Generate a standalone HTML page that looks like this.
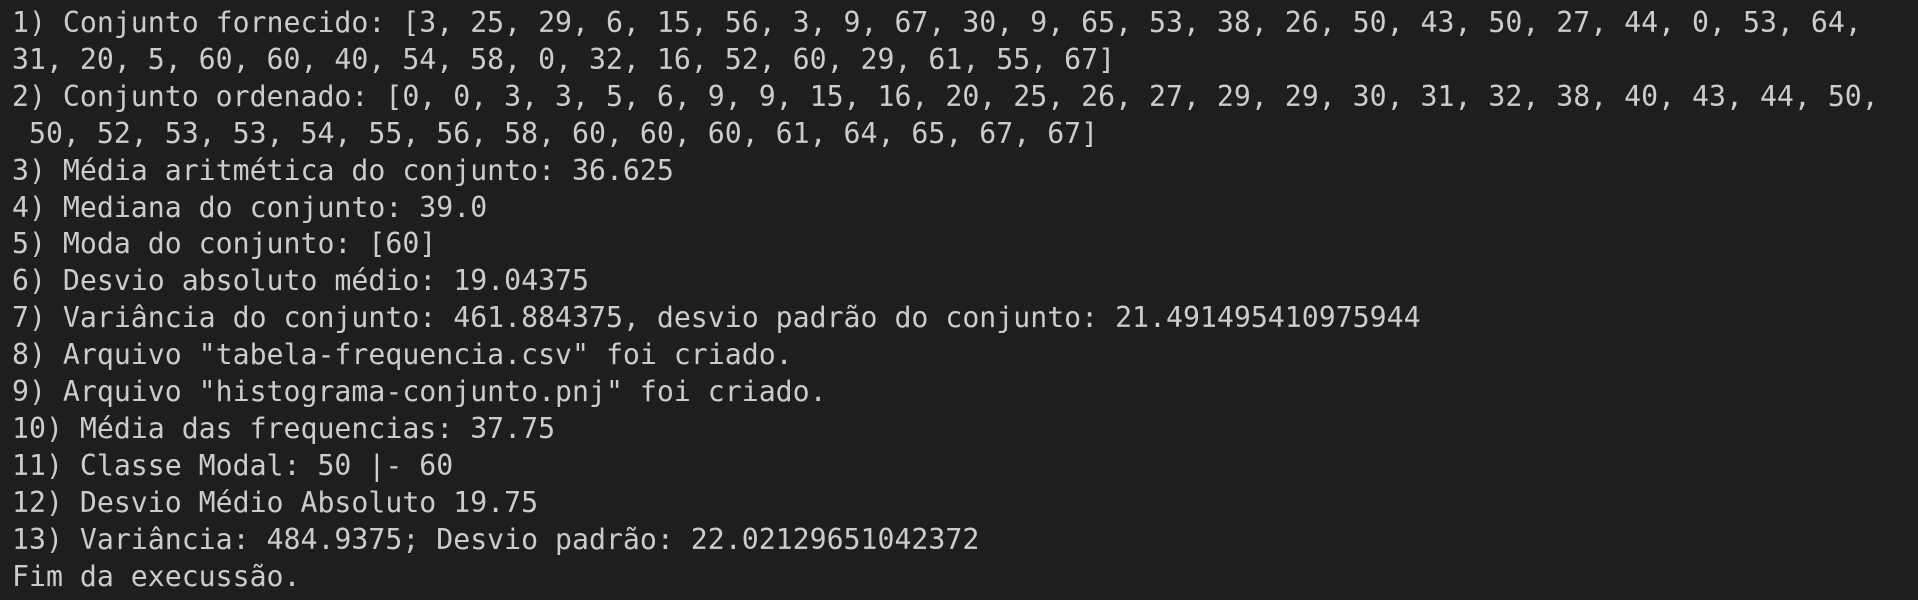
<!DOCTYPE html>
<html><head><meta charset="utf-8"><style>
html,body{margin:0;padding:0;background:#1e1e1e;width:1918px;height:600px;overflow:hidden}
pre{margin:0;position:absolute;left:12px;top:5px;font-family:"DejaVu Sans Mono","Liberation Mono",monospace;font-size:28.2px;line-height:36.9px;color:#cccccc;white-space:pre}
</style></head><body>
<pre>1) Conjunto fornecido: [3, 25, 29, 6, 15, 56, 3, 9, 67, 30, 9, 65, 53, 38, 26, 50, 43, 50, 27, 44, 0, 53, 64,
31, 20, 5, 60, 60, 40, 54, 58, 0, 32, 16, 52, 60, 29, 61, 55, 67]
2) Conjunto ordenado: [0, 0, 3, 3, 5, 6, 9, 9, 15, 16, 20, 25, 26, 27, 29, 29, 30, 31, 32, 38, 40, 43, 44, 50,
 50, 52, 53, 53, 54, 55, 56, 58, 60, 60, 60, 61, 64, 65, 67, 67]
3) Média aritmética do conjunto: 36.625
4) Mediana do conjunto: 39.0
5) Moda do conjunto: [60]
6) Desvio absoluto médio: 19.04375
7) Variância do conjunto: 461.884375, desvio padrão do conjunto: 21.491495410975944
8) Arquivo "tabela-frequencia.csv" foi criado.
9) Arquivo "histograma-conjunto.pnj" foi criado.
10) Média das frequencias: 37.75
11) Classe Modal: 50 |- 60
12) Desvio Médio Absoluto 19.75
13) Variância: 484.9375; Desvio padrão: 22.02129651042372
Fim da execussão.</pre>
</body></html>
